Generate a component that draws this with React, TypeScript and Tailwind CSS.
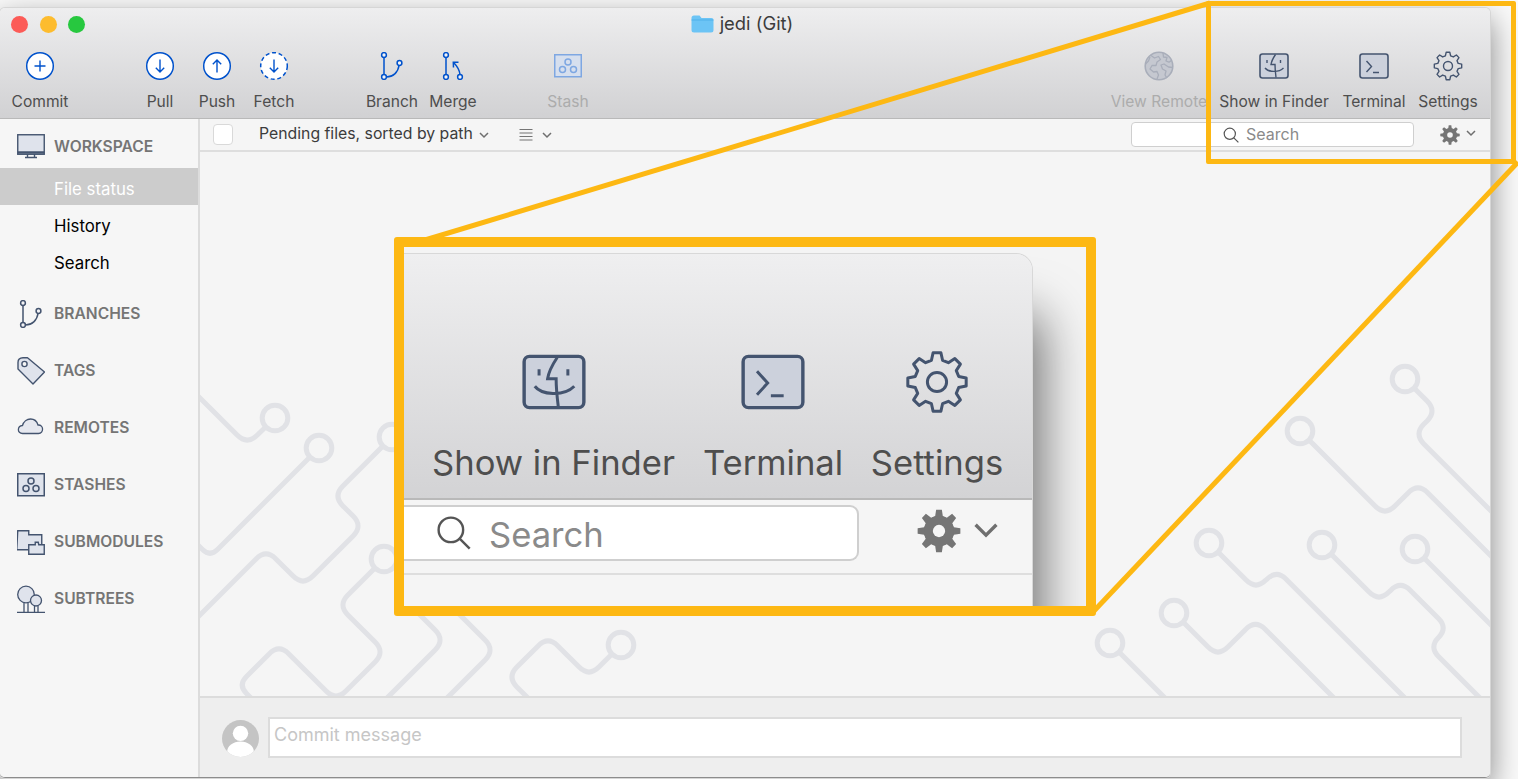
import React from "react";

const NAVY = "#44546f";
const BLUE = "#0052cc";

function roundedPath(pts: number[][], r = 14) {
  let d = `M${pts[0][0]} ${pts[0][1]}`;
  for (let i = 1; i < pts.length - 1; i++) {
    const [px, py] = pts[i - 1];
    const [x, y] = pts[i];
    const [nx, ny] = pts[i + 1];
    const l1 = Math.hypot(x - px, y - py);
    const l2 = Math.hypot(nx - x, ny - y);
    const rr = Math.min(r, l1 / 2, l2 / 2);
    const ax = x + ((px - x) / l1) * rr;
    const ay = y + ((py - y) / l1) * rr;
    const bx = x + ((nx - x) / l2) * rr;
    const by = y + ((ny - y) / l2) * rr;
    d += ` L${ax} ${ay} Q${x} ${y} ${bx} ${by}`;
  }
  const last = pts[pts.length - 1];
  return d + ` L${last[0]} ${last[1]}`;
}

function gearPath(cx: number, cy: number, outer: number, inner: number, teeth = 8) {
  const pts: string[] = [];
  const step = (Math.PI * 2) / teeth;
  for (let i = 0; i < teeth; i++) {
    const a = i * step - Math.PI / 2;
    const add = (ang: number, rad: number) => pts.push(`${(cx + Math.cos(ang) * rad).toFixed(2)} ${(cy + Math.sin(ang) * rad).toFixed(2)}`);
    add(a - step * 0.32, inner);
    add(a - step * 0.17, outer);
    add(a + step * 0.17, outer);
    add(a + step * 0.32, inner);
  }
  return "M" + pts.join(" L") + " Z";
}

const traces: { c?: number[]; p: number[][] }[] = [
  { c: [275, 418], p: [[190, 388], [247, 445], [275, 418]] },
  { c: [319, 448], p: [[319, 448], [210, 557], [195, 542]] },
  { c: [392, 437], p: [[392, 437], [333, 496], [363, 526], [303, 586], [266, 549], [195, 620]] },
  { c: [384, 559], p: [[384, 559], [338, 605], [385, 652], [336, 701], [279, 644], [238, 685], [255, 702]] },
  { p: [[400, 595], [445, 640], [385, 700]] },
  { p: [[440, 595], [495, 650], [445, 700]] },
  { c: [621, 645], p: [[621, 645], [589, 677], [548, 636], [507, 677], [530, 700]] },
  { c: [1405, 379], p: [[1405, 379], [1437, 411], [1414, 434], [1495, 515]] },
  { c: [1300, 431], p: [[1300, 431], [1385, 516], [1418, 483], [1495, 560]] },
  { c: [1209, 543], p: [[1209, 543], [1256, 590], [1276.5, 569.5], [1410, 703]] },
  { c: [1322, 545], p: [[1322, 545], [1379, 602], [1400.5, 580.5], [1448, 628], [1429, 647], [1485, 703]] },
  { c: [1415, 549], p: [[1415, 549], [1495, 629]] },
  { c: [1174, 613], p: [[1174, 613], [1218, 657], [1255.5, 619.5], [1340, 704]] },
  { c: [1110, 643], p: [[1110, 643], [1170, 703]] },
];

function Circuit() {
  return (
    <svg className="absolute inset-0 w-full h-full" viewBox="200 152 1290 544" preserveAspectRatio="none">
      {traces.map((t, i) => (
        <path key={i} d={roundedPath(t.p)} fill="none" stroke="#e1e2e6" strokeWidth={5} />
      ))}
      {traces.map((t, i) =>
        t.c ? <circle key={i} cx={t.c[0]} cy={t.c[1]} r={12.8} fill="#f5f5f5" stroke="#e1e2e6" strokeWidth={5} /> : null
      )}
    </svg>
  );
}

function Circle28({ children, dashed }: { children: React.ReactNode; dashed?: boolean }) {
  return (
    <svg width="30" height="30" viewBox="0 0 30 30">
      <circle cx="15" cy="15" r="13.3" fill="#fff" stroke={BLUE} strokeWidth="1.5" strokeDasharray={dashed ? "4 2.7" : undefined} />
      <g fill="none" stroke={BLUE} strokeWidth="1.4">{children}</g>
    </svg>
  );
}

const CommitIcon = () => <Circle28><path d="M15 9.500v11M9.500 15h11" /></Circle28>;
const PullIcon = () => <Circle28><path d="M15 8.500v12.500M10.800 16.800l4.200 4.200 4.200-4.200" /></Circle28>;
const PushIcon = () => <Circle28><path d="M15 21.500V9M10.800 13.200L15 9l4.200 4.200" /></Circle28>;
const FetchIcon = () => <Circle28 dashed><path d="M15 8.500v12.500M10.800 16.800l4.200 4.200 4.200-4.200" /></Circle28>;

function BranchIcon({ color = BLUE }: { color?: string }) {
  return (
    <svg width="28" height="28" viewBox="0 0 28 28" fill="none" stroke={color} strokeWidth="1.5">
      <circle cx="6" cy="3" r="2.4" fill="#f3f3f5" />
      <circle cx="21.5" cy="11" r="2.4" fill="#f3f3f5" />
      <circle cx="6" cy="25" r="2.4" fill="#f3f3f5" />
      <path d="M6 5.5v17M8.5 25c6.500 0 11.500-4.500 12.500-11.500" />
    </svg>
  );
}

const MergeIcon = () => (
  <svg width="28" height="28" viewBox="0 0 28 28" fill="none" stroke={BLUE} strokeWidth="1.5">
    <circle cx="7" cy="3" r="2.4" fill="#f3f3f5" />
    <circle cx="7" cy="25" r="2.4" fill="#f3f3f5" />
    <circle cx="21" cy="25" r="2.4" fill="#f3f3f5" />
    <path d="M7 5.500v17M21 22.500c-.5-4-2.500-8-6-11.500M14.500 15.500l-.2-5.200 5.200-.1" />
  </svg>
);

function StashIcon({ stroke, fill, sidebar }: { stroke: string; fill: string; sidebar?: boolean }) {
  return (
    <svg width="28" height="28" viewBox="0 0 28 28" fill="none" stroke={stroke} strokeWidth="1.5">
      <rect x="0.75" y="2.75" width="26.5" height="22" fill={fill} />
      <circle cx="14" cy="10" r="3" />
      <circle cx={sidebar ? 9 : 8.5} cy="17.500" r="3" />
      <circle cx={sidebar ? 19 : 19.5} cy="17.500" r="3" />
    </svg>
  );
}

const GlobeIcon = () => (
  <svg width="30" height="30" viewBox="0 0 30 30" fill="none" stroke="#a9aeba" strokeWidth="1.300" strokeLinejoin="round">
    <circle cx="15" cy="15" r="13.800" fill="#c5c8d0" strokeWidth="1.600" />
    <path d="M7 4.500l3.500 2.500 4-1.500 2 3-3.500 2.500-1 3.500H8l-2 3.500 3.500 3 3.500-.5 1.500 3.500-1.500 4" />
    <path d="M1.500 13l3-3 1.500-4" />
    <path d="M19 1.800l.5 4.200 3.500.5-1 3.500 3 1.200 2.700-2" />
    <path d="M28.500 16.500l-4-.5-4.500-3-3 1 1.500 4 3.500 2-1 4 2 3.200" />
  </svg>
);

function FinderIcon({ size = 30 }: { size?: number }) {
  return (
    <svg width={size} height={size} viewBox="0 0 30 30" fill="none" stroke={NAVY} strokeWidth="1.4">
      <rect x="1" y="3" width="28" height="24" rx="2.500" fill="#ccd1dc" strokeWidth="1.600" />
      <path d="M16.500 3.500c-2 3-4 6.500-4.500 10h4c0 4.500.5 9 1 13" />
      <path d="M8 9v3M21.500 9v3" />
      <path d="M6 17c3 4 13.500 5 18.500 0" />
    </svg>
  );
}

function TerminalIcon({ size = 30 }: { size?: number }) {
  return (
    <svg width={size} height={size} viewBox="0 0 30 30" fill="none" stroke={NAVY} strokeWidth="1.4">
      <rect x="1" y="3" width="28" height="24" rx="2.500" fill="#ccd1dc" strokeWidth="1.600" />
      <path d="M7.500 10l5 5.500-5 5.500M14 21.500h6" />
    </svg>
  );
}

function SettingsIcon({ size = 30 }: { size?: number }) {
  return (
    <svg width={size} height={size} viewBox="0 0 30 30" fill="none" stroke={NAVY} strokeWidth="1.4" strokeLinejoin="round">
      <path d={gearPath(15, 15, 13.8, 10.5)} />
      <circle cx="15" cy="15" r="4.500" />
    </svg>
  );
}

function SolidGear({ size = 20 }: { size?: number }) {
  return (
    <svg width={size} height={size} viewBox="0 0 20 20">
      <path d={gearPath(10, 10, 9.800, 7)} fill="#757575" />
      <circle cx="10" cy="10" r="6.800" fill="#757575" />
      <circle cx="10" cy="10" r="2.800" fill="#f5f5f5" />
    </svg>
  );
}

function Chevron({ size = 10, color = "#6f6f6f", sw = 1.500 }: { size?: number; color?: string; sw?: number }) {
  return (
    <svg width={size} height={size} viewBox="0 0 10 10" fill="none" stroke={color} strokeWidth={sw}>
      <path d="M1 3l4 4 4-4" />
    </svg>
  );
}

function Magnifier({ size = 16, sw = 1.200 }: { size?: number; sw?: number }) {
  return (
    <svg width={size} height={size} viewBox="0 0 16 16" fill="none" stroke="#555" strokeWidth={sw}>
      <circle cx="6.800" cy="6.800" r="5.600" />
      <path d="M10.800 10.800l4.600 4.600" />
    </svg>
  );
}

const MonitorIcon = () => (
  <svg width="28" height="28" viewBox="0 0 28 28" fill="none" stroke={NAVY} strokeWidth="1.4">
    <rect x="0.75" y="1.750" width="26.5" height="19.500" fill="#dfe3ec" />
    <path d="M0.75 19.500h26.500" strokeWidth="2.500" />
    <path d="M10.500 21v3M17.500 21v3M8 24.500h12" />
  </svg>
);

const TagIcon = () => (
  <svg width="28" height="28" viewBox="0 0 28 28" fill="#dfe3ec" stroke={NAVY} strokeWidth="1.4" strokeLinejoin="round">
    <path d="M6 0.800h4.500L27.500 15 16 27 1 12V5.500Q1 1 6 .8z" />
    <circle cx="7.500" cy="7" r="2.600" fill="#f5f5f5" />
  </svg>
);

const CloudIcon = () => (
  <svg width="28" height="28" viewBox="0 0 28 28" fill="#e6e8ef" stroke={NAVY} strokeWidth="1.3">
    <path d="M5.500 19.500c-5.500 0-5.500-7.500 0-8 1-4 4.500-6.500 8-6.500 4 0 6.500 2.500 7.500 6 6-.5 6 8.500.5 8.500z" />
  </svg>
);

const SubmoduleIcon = () => (
  <svg width="28" height="28" viewBox="0 0 28 28" fill="#dfe3ec" stroke={NAVY} strokeWidth="1.4">
    <path d="M0.750 2.750h11v4h13v15h-25z" />
    <path d="M11.750 26.250v-9.500h6.500v-2.500h3l.5 2.500h5.500v9.500z" />
  </svg>
);

const SubtreeIcon = () => (
  <svg width="28" height="28" viewBox="0 0 28 28" fill="#dfe3ec" stroke={NAVY} strokeWidth="1.300">
    <path d="M7 18v9M11 18v9M17.500 21v6M21 21v6" fill="none" />
    <circle cx="9" cy="9.500" r="8.300" />
    <circle cx="19" cy="15.500" r="5.500" />
    <path d="M0 27.500h28" fill="none" strokeWidth="1.500" />
  </svg>
);

function Tool({ label, w, ml, disabled, children }: { label: string; w: string; ml: string; disabled?: boolean; children: React.ReactNode }) {
  return (
    <div className={`flex flex-col items-center shrink-0 ${w} ${ml}`}>
      <div className="h-[30px] flex items-center justify-center">{children}</div>
      <div className={`mt-[9px] text-[15.6px] leading-[24px] whitespace-nowrap ${disabled ? "text-[#acacac]" : "text-[#4e4e4e]"}`}>{label}</div>
    </div>
  );
}

function Section({ label, icon }: { label: string; icon: React.ReactNode }) {
  return (
    <div className="h-[57px] flex items-center pl-[17px]">
      <div className="w-[28px] h-[28px] shrink-0">{icon}</div>
      <div className="ml-[9px] text-[15.6px] font-semibold text-[#757575]">{label}</div>
    </div>
  );
}

export default function App() {
  return (
    <div className="relative w-[1518px] h-[779px] overflow-hidden bg-[#fafafa] font-['Inter',sans-serif]">
      <div className="pt-[8px]">
        <div className="w-[1490px] h-[770px] flex flex-col rounded-[5px] overflow-hidden border-b border-[#8c8c8c] bg-[#f5f5f5] shadow-[0_0_0_1px_#d6d6d6,0_12px_32px_rgba(0,0,0,0.5)]">
          {/* toolbar */}
          <div className="h-[111px] shrink-0 flex flex-col bg-gradient-to-b from-[#eeeeef] to-[#d1d1d3] border-b border-[#b9b9b9]">
            <div className="h-[30px] shrink-0 relative flex items-center justify-center pr-[6px] pt-[2px]">
              <div className="absolute left-[11px] top-[8px] flex gap-[11.500px]">
                <span className="w-[17px] h-[17px] rounded-full bg-[#fc5b57]" />
                <span className="w-[17px] h-[17px] rounded-full bg-[#fdbc2e]" />
                <span className="w-[17px] h-[17px] rounded-full bg-[#27c83f]" />
              </div>
              <svg width="23" height="18" viewBox="0 0 23 18">
                <path d="M0.500 3q0-2.500 2.500-2.500h5.500l2 2.500h10q2 0 2 2v10q0 2.500-2.500 2.500H3q-2.500 0-2.500-2.500z" fill="#6cc4f5" />
                <path d="M0.500 5.500h22v-1h-22z" fill="#4fb0ea" />
              </svg>
              <span className="ml-[6px] text-[18.4px] text-[#3c3c3c]">jedi (Git)</span>
            </div>
            <div className="flex items-start pt-[13px] pr-[10px]">
              <Tool label="Commit" w="w-[80px]" ml="ml-0"><CommitIcon /></Tool>
              <Tool label="Pull" w="w-[56px]" ml="ml-[52px]"><PullIcon /></Tool>
              <Tool label="Push" w="w-[58px]" ml="ml-0"><PushIcon /></Tool>
              <Tool label="Fetch" w="w-[56px]" ml="ml-0"><FetchIcon /></Tool>
              <Tool label="Branch" w="w-[64px]" ml="ml-[58px]"><BranchIcon /></Tool>
              <Tool label="Merge" w="w-[58px]" ml="ml-0"><MergeIcon /></Tool>
              <Tool label="Stash" w="w-[60px]" ml="ml-[56px]" disabled><StashIcon stroke="#7ea7e2" fill="#d6dfee" /></Tool>
              <div className="flex-1" />
              <Tool label="View Remote" w="w-[100px]" ml="ml-0" disabled><GlobeIcon /></Tool>
              <Tool label="Show in Finder" w="w-[110px]" ml="ml-[10px]"><FinderIcon /></Tool>
              <Tool label="Terminal" w="w-[70px]" ml="ml-[10px]"><TerminalIcon /></Tool>
              <Tool label="Settings" w="w-[64px]" ml="ml-[7px]"><SettingsIcon /></Tool>
            </div>
          </div>
          {/* body */}
          <div className="flex-1 flex min-h-0">
            <aside className="w-[200px] shrink-0 border-r-2 border-[#dcdcdc] bg-[#f6f6f6] flex flex-col">
              <div className="h-[49px] flex items-center pl-[17px] pt-[6px]">
                <div className="w-[28px] h-[28px] shrink-0"><MonitorIcon /></div>
                <div className="ml-[9px] text-[15.6px] font-semibold text-[#757575]">WORKSPACE</div>
              </div>
              <div className="h-[37px] flex items-center pl-[54px] pt-[6px] bg-[#cccccc] text-white text-[16.8px]">File status</div>
              <div className="h-[37px] flex items-center pl-[54px] pt-[6px] text-black text-[16.8px]">History</div>
              <div className="h-[37px] flex items-center pl-[54px] pt-[6px] text-black text-[16.8px]">Search</div>
              <div className="mt-[6.500px]">
                <Section label="BRANCHES" icon={<BranchIcon color={NAVY} />} />
                <Section label="TAGS" icon={<TagIcon />} />
                <Section label="REMOTES" icon={<CloudIcon />} />
                <Section label="STASHES" icon={<StashIcon stroke={NAVY} fill="#dfe3ec" sidebar />} />
                <Section label="SUBMODULES" icon={<SubmoduleIcon />} />
                <Section label="SUBTREES" icon={<SubtreeIcon />} />
              </div>
            </aside>
            <main className="flex-1 min-w-0 flex flex-col">
              <div className="h-[33px] shrink-0 flex items-center border-b-2 border-[#dedede] pl-[13px] pr-[14px]">
                <span className="w-[20px] h-[21px] rounded-[4px] bg-white border border-[#d9d9d9]" />
                <span className="ml-[26px] mb-[2px] text-[15.8px] text-[#3c3c3c]">Pending files, sorted by path</span>
                <span className="ml-[6px]"><Chevron /></span>
                <svg width="14" height="14" viewBox="0 0 14 14" className="ml-[30px]" stroke="#757575" strokeWidth="1.200">
                  <path d="M0.500 1.500h13M0.500 5h13M0.500 8.500h13M0.500 12h13" />
                </svg>
                <span className="ml-[9px]"><Chevron /></span>
                <div className="flex-1" />
                <div className="w-[283px] h-[25px] flex items-center bg-white border border-[#cfcfcf] rounded-[4px] pl-[91px]">
                  <span className="mt-[1px]"><Magnifier /></span>
                  <span className="ml-[7px] mb-[2px] text-[16px] text-[#8a8a8a]">Search</span>
                </div>
                <span className="ml-[26px]"><SolidGear /></span>
                <span className="ml-[6px] mb-[3px]"><Chevron /></span>
              </div>
              <div className="relative flex-1 min-h-0 bg-[#f5f5f5]">
                <Circuit />
              </div>
              <div className="h-[81px] shrink-0 flex items-start bg-[#eeeeee] border-t-2 border-[#dcdcdc] pl-[22px] pr-[28px] pt-[19px]">
                <svg width="37" height="37" viewBox="0 0 36 36" className="mt-[3px] shrink-0">
                  <defs>
                    <clipPath id="av"><circle cx="18" cy="18" r="18" /></clipPath>
                  </defs>
                  <circle cx="18" cy="18" r="18" fill="#c4c4c4" />
                  <g clipPath="url(#av)" fill="#fff">
                    <circle cx="18" cy="13" r="7.500" />
                    <ellipse cx="18" cy="31" rx="13" ry="10" />
                  </g>
                </svg>
                <div className="ml-[9px] flex-1 h-[41px] bg-white border-2 border-[#dcdcdc] pl-[4px] flex items-start">
                  <span className="text-[18px] leading-[32px] text-[#c6c6c6]">Commit message</span>
                </div>
              </div>
            </main>
          </div>
        </div>
      </div>

      {/* callout lines */}
      <svg className="absolute inset-0 pointer-events-none" width="1518" height="779" viewBox="0 0 1518 779">
        <path d="M1210 3L425 240" stroke="#fdb813" strokeWidth="5" fill="none" />
        <path d="M1518 162L1093 612" stroke="#fdb813" strokeWidth="5" fill="none" />
      </svg>

      {/* small highlight */}
      <div className="absolute left-[1206px] top-[1px] w-[310px] h-[163px] border-[5px] border-[#fdb813] rounded-[2px]" />

      {/* magnified callout */}
      <div className="absolute left-[394px] top-[237px] w-[702px] h-[379px] border-[10px] border-[#fdb813] rounded-[3px] bg-[#f4f4f4] overflow-hidden pt-[7px]">
        <div className="w-[628px] h-[370px] flex flex-col bg-[#f5f5f5] rounded-tr-[16px] shadow-[0_0_0_1px_#d8d8d8,10px_60px_50px_rgba(0,0,0,0.55)] overflow-hidden">
          <div className="h-[246px] shrink-0 bg-gradient-to-b from-[#efeff0] to-[#d3d3d5] border-b-2 border-[#b9b9b9] flex items-start pt-[96px]">
            <div className="w-[299px] shrink-0 flex flex-col items-center">
              <FinderIcon size={64} />
              <div className="mt-[26px] text-[34.6px] leading-[44px] text-[#4e4e4e] whitespace-nowrap">Show in Finder</div>
            </div>
            <div className="w-[140px] shrink-0 flex flex-col items-center">
              <TerminalIcon size={64} />
              <div className="mt-[26px] text-[34.6px] leading-[44px] text-[#4e4e4e] whitespace-nowrap">Terminal</div>
            </div>
            <div className="w-[140px] ml-[24px] shrink-0 flex flex-col items-center">
              <SettingsIcon size={64} />
              <div className="mt-[26px] text-[34.6px] leading-[44px] text-[#4e4e4e] whitespace-nowrap">Settings</div>
            </div>
          </div>
          <div className="h-[75px] shrink-0 flex items-center border-b-2 border-[#dedede]">
            <div className="w-[455px] h-[56px] shrink-0 flex items-center bg-white border-2 border-l-0 border-[#cfcfcf] rounded-r-[9px] pl-[32px] mb-[8px]">
              <Magnifier size={35} sw={1.100} />
              <span className="ml-[18px] text-[34.6px] leading-[44px] mt-[2px] text-[#8a8a8a]">Search</span>
            </div>
            <span className="ml-[58px] mb-[12px]"><SolidGear size={44} /></span>
            <span className="ml-[12px] mb-[14px]"><Chevron size={26} sw={1.300} /></span>
          </div>
        </div>
      </div>
    </div>
  );
}
